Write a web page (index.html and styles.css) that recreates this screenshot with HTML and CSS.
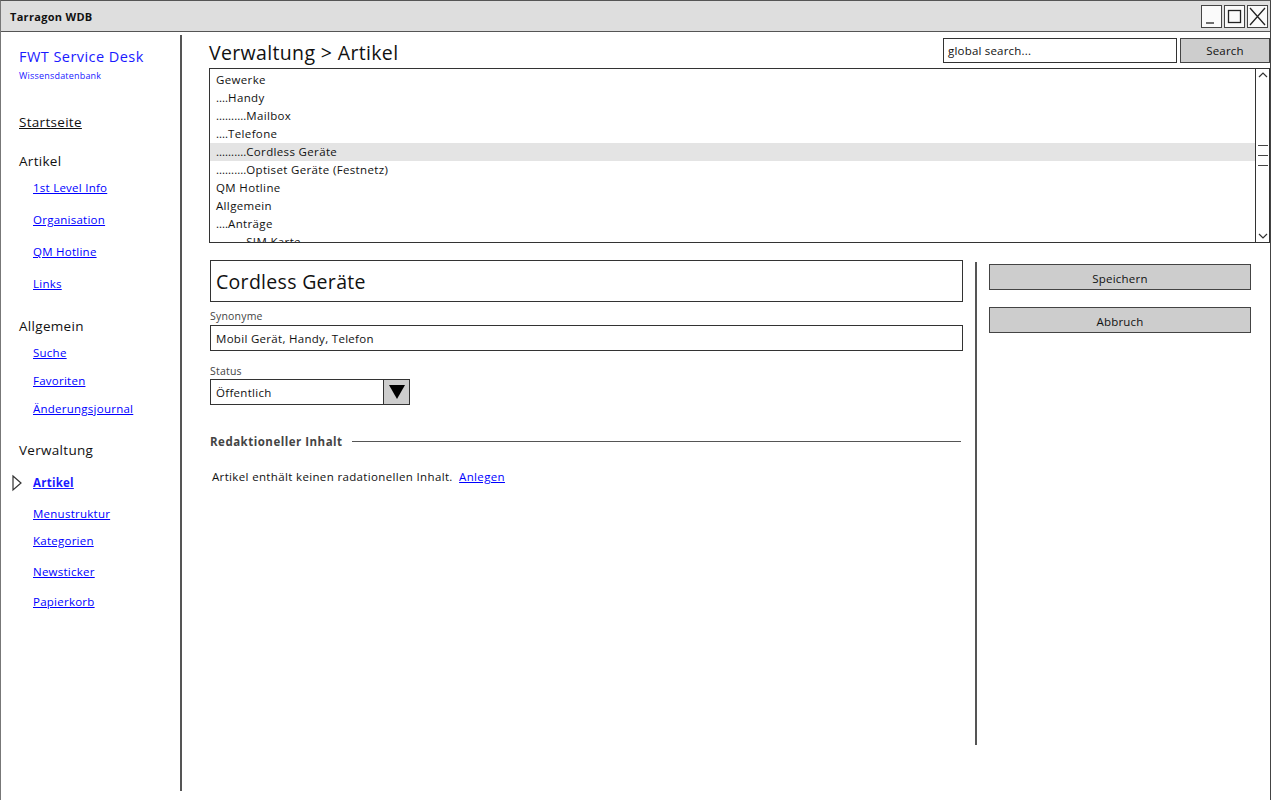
FILE: index.html
```html
<!DOCTYPE html>
<html lang="de">
<head>
<meta charset="utf-8">
<title>Tarragon WDB</title>
<link rel="stylesheet" href="styles.css">
</head>
<body>
<div class="window">
  <div class="titlebar">
    <span class="title">Tarragon WDB</span>
    <div class="winctrls">
      <span class="wbtn"><svg width="21" height="23" viewBox="0 0 21 23"><path d="M5 18 H13" stroke="#222" stroke-width="1.3" fill="none"/></svg></span>
      <span class="wbtn"><svg width="21" height="23" viewBox="0 0 21 23"><rect x="4.5" y="5.5" width="12" height="12" stroke="#222" stroke-width="1.3" fill="none"/></svg></span>
      <span class="wbtn"><svg width="21" height="23" viewBox="0 0 21 23"><path d="M3 3 L18 20 M18 3 L3 20" stroke="#222" stroke-width="1.3" fill="none"/></svg></span>
    </div>
  </div>
  <div class="frame">
    <nav class="sidebar">
      <div class="brand">FWT Service Desk</div>
      <div class="brand-sub">Wissensdatenbank</div>
      <a class="home" href="#">Startseite</a>

      <div class="grp-title g-artikel">Artikel</div>
      <ul class="links links-a">
        <li><a href="#">1st Level Info</a></li>
        <li><a href="#">Organisation</a></li>
        <li><a href="#">QM Hotline</a></li>
        <li><a href="#">Links</a></li>
      </ul>

      <div class="grp-title g-allg">Allgemein</div>
      <ul class="links links-b">
        <li><a href="#">Suche</a></li>
        <li><a href="#">Favoriten</a></li>
        <li><a href="#">Änderungsjournal</a></li>
      </ul>

      <div class="grp-title g-verw">Verwaltung</div>
      <ul class="links links-c">
        <li class="current"><svg class="marker" width="12" height="18" viewBox="0 0 12 18"><path d="M2 2 L10 9 L2 16 Z" stroke="#333" stroke-width="1.2" fill="none"/></svg><a href="#">Artikel</a></li>
        <li class="m11"><a href="#">Menustruktur</a></li>
        <li class="m7"><a href="#">Kategorien</a></li>
        <li class="m11"><a href="#">Newsticker</a></li>
        <li class="m10"><a href="#">Papierkorb</a></li>
      </ul>
    </nav>

    <main class="main">
      <div class="header">
        <h1 class="crumb">Verwaltung &gt; Artikel</h1>
        <div class="search">
          <div class="search-input">global search...</div>
          <div class="btn search-btn">Search</div>
        </div>
      </div>

      <div class="tree">
        <ul class="tree-rows">
          <li>Gewerke</li>
          <li><span class="ind">....</span>Handy</li>
          <li><span class="ind">..........</span>Mailbox</li>
          <li><span class="ind">....</span>Telefone</li>
          <li class="sel"><span class="ind">..........</span>Cordless Geräte</li>
          <li><span class="ind">..........</span>Optiset Geräte (Festnetz)</li>
          <li>QM Hotline</li>
          <li>Allgemein</li>
          <li><span class="ind">....</span>Anträge</li>
          <li><span class="ind">..........</span>SIM Karte</li>
        </ul>
        <div class="scrollbar">
          <svg class="up" width="14" height="12" viewBox="0 0 14 12"><path d="M3 8 L7 4 L11 8" stroke="#333" stroke-width="1.2" fill="none"/></svg>
          <div class="thumb"><span></span><span></span><span></span></div>
          <svg class="down" width="14" height="12" viewBox="0 0 14 12"><path d="M3 4 L7 8 L11 4" stroke="#333" stroke-width="1.2" fill="none"/></svg>
        </div>
      </div>

      <div class="content">
        <section class="form">
          <div class="title-box">Cordless Geräte</div>
          <div class="label">Synonyme</div>
          <div class="field">Mobil Gerät, Handy, Telefon</div>
          <div class="label status-label">Status</div>
          <div class="select">
            <span class="select-val">Öffentlich</span>
            <span class="select-btn"><svg width="18" height="16" viewBox="0 0 18 16"><path d="M1 1 H17 L9 15 Z" fill="#000"/></svg></span>
          </div>
          <div class="fieldset">
            <span class="legend">Redaktioneller Inhalt</span>
            <span class="rule"></span>
          </div>
          <p class="note">Artikel enthält keinen radationellen Inhalt. <a href="#">Anlegen</a></p>
        </section>
        <div class="vsep"></div>
        <aside class="actions">
          <div class="btn act">Speichern</div>
          <div class="btn act">Abbruch</div>
        </aside>
      </div>
    </main>
  </div>
</div>
</body>
</html>
```

FILE: styles.css
```css
* { box-sizing: border-box; }
html, body { margin: 0; padding: 0; background: #fff; }
body {
  font-family: "Open Sans", "DejaVu Sans", sans-serif;
  color: #111;
  font-size: 12px;
}
ul { list-style: none; margin: 0; padding: 0; }
a { color: #0000ff; text-decoration: underline; }

.window {
  width: 1271px;
  height: 800px;
  border-left: 1px solid #777;
  border-right: 1px solid #444;
  border-top: 1px solid #555;
  display: flex;
  flex-direction: column;
}
.titlebar {
  height: 31px;
  background: #dedede;
  border-bottom: 1px solid #555;
  display: flex;
  align-items: center;
  justify-content: space-between;
  padding: 0 2px 0 9px;
}
.title { font-weight: bold; font-size: 11px; letter-spacing: 0.3px; }
.winctrls { display: flex; gap: 2px; margin-top: 1px; }
.wbtn {
  width: 21px; height: 23px;
  border: 1px solid #444;
  background: #fafafa;
  display: block;
}
.wbtn svg { display: block; margin: -1px; }

.frame { flex: 1; display: flex; min-height: 0; }

.sidebar {
  width: 181px;
  flex: none;
  border-right: 2px solid #555;
  margin: 3px 0 9px;
  padding: 12px 0 0 18px;
  display: flex;
  flex-direction: column;
}
.sidebar a, .sidebar div { line-height: 20px; height: 20px; }
.brand { color: #1a1aff; font-size: 14.5px; letter-spacing: 0.45px; }
.brand-sub { color: #1a1aff; font-size: 9px; letter-spacing: 0.2px; line-height: 14px !important; height: 14px !important; margin-top: 2px; }
.home { color: #111; font-size: 13.5px; letter-spacing: 0.3px; margin-top: 29px; align-self: flex-start; }
.grp-title { font-size: 13.5px; color: #111; letter-spacing: 0.3px; }
.g-artikel { margin-top: 19px; }
.g-allg { margin-top: 22px; }
.g-verw { margin-top: 21px; }
.links { padding-left: 14px; display: flex; flex-direction: column; }
.links li { height: 20px; line-height: 20px; font-size: 11.5px; letter-spacing: 0.25px; position: relative; }
.links-a { margin-top: 7px; gap: 12px; }
.links-b { margin-top: 7px; gap: 8px; }
.links-c { margin-top: 13px; }
.links-c .m11 { margin-top: 11px; }
.links-c .m7 { margin-top: 7px; }
.links-c .m10 { margin-top: 10px; }
.current a { font-weight: bold; color: #1a1aff; }
.marker { position: absolute; left: -22px; top: 1px; }

.main {
  flex: 1;
  min-width: 0;
  padding-left: 27px;
  display: flex;
  flex-direction: column;
}
.header {
  display: flex;
  align-items: center;
  justify-content: space-between;
  padding-top: 6px;
  height: 31px;
}
.crumb { margin: 0; font-weight: normal; font-size: 19.5px; letter-spacing: 0.35px; line-height: 25px; margin-top: 3px; color: #111; }
.search { display: flex; align-items: stretch; height: 25px; }
.search-input {
  width: 234px;
  border: 1px solid #333;
  padding: 0 4px;
  line-height: 23px;
  font-size: 11.5px;
  letter-spacing: 0.2px;
}
.btn {
  background: #cdcdcd;
  border: 1px solid #444;
  text-align: center;
  font-size: 11.5px;
  letter-spacing: 0.2px;
}
.search-btn { width: 90px; margin-left: 3px; line-height: 23px; }

.tree {
  margin-top: 5px;
  height: 175px;
  border: 1px solid #333;
  display: flex;
  overflow: hidden;
}
.tree-rows { flex: 1; padding-top: 2px; overflow: hidden; }
.tree-rows li { height: 18px; line-height: 18px; padding-left: 6px; font-size: 11.5px; letter-spacing: 0.35px; white-space: nowrap; }
.tree-rows .ind { letter-spacing: 0; }
.tree-rows li.sel { background: #e4e4e4; }
.scrollbar {
  width: 14px;
  border-left: 1px solid #333;
  display: flex;
  flex-direction: column;
  align-items: center;
}
.scrollbar svg { display: block; }
.up { margin-top: 0; }
.thumb { margin-top: 64px; display: flex; flex-direction: column; gap: 9px; width: 10px; }
.thumb span { display: block; height: 1px; background: #444; }
.down { margin-top: auto; margin-bottom: 0; }

.content { display: flex; padding-top: 17px; padding-left: 1px; }
.form { width: 753px; flex: none; }
.title-box {
  height: 42px;
  border: 1px solid #333;
  padding-left: 5px;
  font-size: 19.5px;
  letter-spacing: 0.3px;
  line-height: 42px;
}
.label { color: #444; font-size: 10.5px; letter-spacing: 0.2px; line-height: 14px; margin-top: 7px; }
.field {
  margin-top: 2px;
  height: 26px;
  border: 1px solid #333;
  padding-left: 5px;
  line-height: 25px;
  font-size: 11.5px;
  letter-spacing: 0.3px;
}
.status-label { margin-top: 13px; }
.select {
  margin-top: 1px;
  width: 200px;
  height: 26px;
  border: 1px solid #333;
  display: flex;
}
.select-val { flex: 1; padding-left: 5px; line-height: 26px; font-size: 11.5px; letter-spacing: 0.3px; }
.select-btn {
  width: 26px;
  background: #cdcdcd;
  border-left: 1px solid #333;
  display: flex;
  align-items: center;
  justify-content: center;
}
.fieldset { display: flex; align-items: center; margin-top: 27px; height: 18px; }
.legend { color: #444; font-weight: bold; font-size: 11.5px; letter-spacing: 0.5px; }
.rule { flex: 1; height: 1px; background: #555; margin-left: 9px; margin-right: 2px; }
.note { margin: 19px 0 0 2px; font-size: 11.5px; letter-spacing: 0.35px; line-height: 16px; }
.note a { margin-left: 3px; }

.vsep { width: 0; border-left: 2px solid #555; height: 483px; margin: 2px 0 0 12px; }
.actions { width: 262px; margin-left: 12px; display: flex; flex-direction: column; gap: 17px; padding-top: 4px; }
.act { height: 26px; line-height: 27px; }
```
